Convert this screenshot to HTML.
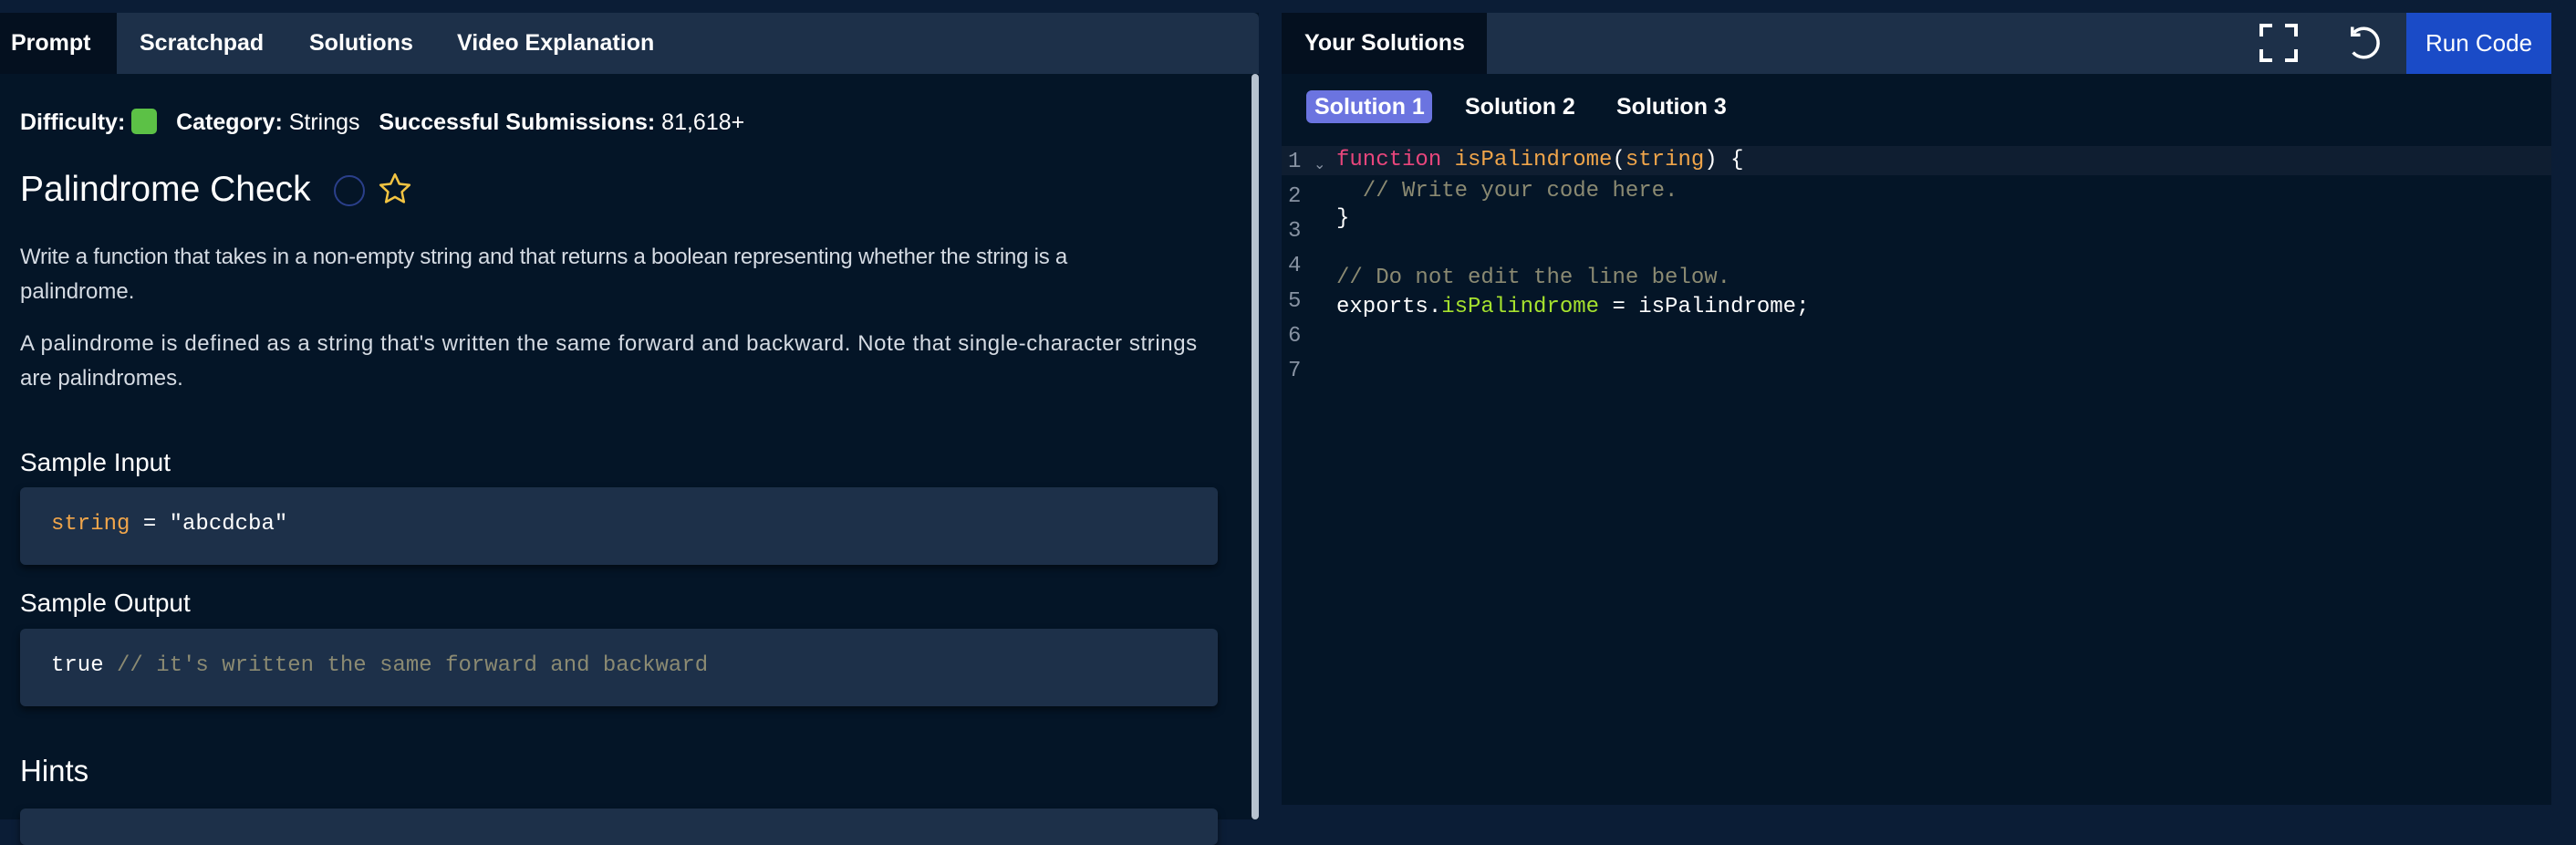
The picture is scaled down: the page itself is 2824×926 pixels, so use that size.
<!DOCTYPE html>
<html><head><style>
*{margin:0;padding:0;box-sizing:border-box}
body{width:2824px;height:898px;background:#0b1d36;font-family:"Liberation Sans",sans-serif;color:#fff;overflow:hidden;position:relative}
.abs{position:absolute}
.panel{background:#041527}
.tabbar{background:#1d3049}
.tab{position:absolute;top:14px;height:67px;line-height:67px;font-weight:bold;font-size:25px;white-space:nowrap}
.mono{font-family:"Liberation Mono","DejaVu Sans Mono",monospace}
p.t{position:absolute;left:22px;font-size:24px;color:#d5dbe3;white-space:nowrap}
.box{position:absolute;left:22px;width:1313px;background:#1d3049;border-radius:6px;box-shadow:0 4px 8px rgba(0,0,0,.5)}
.h{position:absolute;left:22px;font-size:28px;white-space:nowrap}
.ln{position:absolute;left:1412px;font-size:24px;color:#8792a2}
.cl{position:absolute;left:1465px;font-size:24px;white-space:pre}
</style></head><body>
<div class="abs panel" style="left:0;top:14px;width:1380px;height:884px"></div>
<div class="abs tabbar" style="left:0;top:14px;width:1380px;height:67px;border-radius:0 6px 0 0"></div>
<div class="abs" style="left:0;top:14px;width:128px;height:67px;background:#04101f"></div>
<div class="tab" style="left:12px">Prompt</div>
<div class="tab" style="left:153px">Scratchpad</div>
<div class="tab" style="left:339px">Solutions</div>
<div class="tab" style="left:501px">Video Explanation</div>
<div class="abs" style="left:1372px;top:81px;width:8px;height:817px;background:#b7c2cf;border-radius:4px"></div>

<div class="abs" style="left:22px;top:119px;font-size:25px;white-space:nowrap;line-height:28px">
<b>Difficulty:</b> <span style="display:inline-block;width:28px;height:28px;background:#5cc146;border-radius:5px;vertical-align:-5px"></span>&nbsp;&nbsp; <b>Category:</b> Strings&nbsp;&nbsp; <b>Successful Submissions:</b> 81,618+
</div>
<div class="abs" style="left:22px;top:186px;font-size:39px;white-space:nowrap">Palindrome Check</div>
<div class="abs" style="left:366px;top:192px;width:34px;height:34px;border:2px solid #2a3f8a;border-radius:50%"></div>
<svg class="abs" style="left:414px;top:188px" width="38" height="38" viewBox="0 0 24 24"><path d="M12 2l3 6.5 7 .8-5.2 4.8 1.4 7L12 17.6 5.8 21.1l1.4-7L2 9.3l7-.8z" fill="none" stroke="#f3c442" stroke-width="1.6" stroke-linejoin="round"/></svg>

<p class="t" style="top:268px;letter-spacing:-0.25px">Write a function that takes in a non-empty string and that returns a boolean representing whether the string is a</p>
<p class="t" style="top:306px">palindrome.</p>
<p class="t" style="top:363px;letter-spacing:0.6px">A palindrome is defined as a string that's written the same forward and backward. Note that single-character strings</p>
<p class="t" style="top:401px">are palindromes.</p>

<div class="h" style="top:491px">Sample Input</div>
<div class="box" style="top:534px;height:85px"></div>
<div class="abs mono" style="left:56px;top:561px;font-size:24px;white-space:pre"><span style="color:#f0a54a">string</span> = "abcdcba"</div>
<div class="h" style="top:645px">Sample Output</div>
<div class="box" style="top:689px;height:85px"></div>
<div class="abs mono" style="left:56px;top:716px;font-size:24px;white-space:pre">true <span style="color:#8b8a72">// it's written the same forward and backward</span></div>
<div class="h" style="top:826px;font-size:33px">Hints</div>
<div class="box" style="top:886px;height:40px"></div>

<div class="abs panel" style="left:1405px;top:14px;width:1392px;height:868px"></div>
<div class="abs tabbar" style="left:1405px;top:14px;width:1392px;height:67px"></div>
<div class="abs" style="left:1405px;top:14px;width:225px;height:67px;background:#04101f"></div>
<div class="tab" style="left:1430px">Your Solutions</div>
<div class="abs" style="left:2638px;top:14px;width:159px;height:67px;background:#1a4bc7;font-size:26px;line-height:67px;text-align:center">Run Code</div>
<svg class="abs" style="left:2477px;top:26px" width="42" height="42" viewBox="0 0 42 42" fill="none" stroke="#fff" stroke-width="4"><path d="M2 14V2h12M28 2h12v12M40 28v12H28M14 40H2V28"/></svg>
<svg class="abs" style="left:2570px;top:26px" width="42" height="42" viewBox="0 0 24 24" fill="none" stroke="#fff" stroke-width="2"><path d="M6 5.5A9 9 0 1 1 5.5 18"/><path d="M5 2v5h5"/></svg>

<div class="abs" style="left:1432px;top:99px;width:138px;height:36px;background:#6b74e0;border-radius:6px"></div>
<div class="abs" style="left:1441px;top:99px;line-height:36px;font-size:25px;font-weight:bold;white-space:nowrap">Solution 1</div>
<div class="abs" style="left:1606px;top:99px;line-height:36px;font-size:25px;font-weight:bold;white-space:nowrap">Solution 2</div>
<div class="abs" style="left:1772px;top:99px;line-height:36px;font-size:25px;font-weight:bold;white-space:nowrap">Solution 3</div>

<div class="abs" style="left:1405px;top:160px;width:1392px;height:32px;background:#0f1e31"></div>
<div class="ln mono" style="top:164px">1</div><div class="abs" style="left:1440px;top:170px;font-size:16px;color:#8792a2">⌄</div>
<div class="ln mono" style="top:202px">2</div>
<div class="ln mono" style="top:240px">3</div>
<div class="ln mono" style="top:278px">4</div>
<div class="ln mono" style="top:317px">5</div>
<div class="ln mono" style="top:355px">6</div>
<div class="ln mono" style="top:393px">7</div>
<div class="cl mono" style="top:162px"><span style="color:#e8467c">function</span> <span style="color:#f0a54a">isPalindrome</span>(<span style="color:#f0a54a">string</span>) {</div>
<div class="cl mono" style="top:196px;color:#8b8a72">  // Write your code here.</div>
<div class="cl mono" style="top:226px">}</div>
<div class="cl mono" style="top:291px;color:#8b8a72">// Do not edit the line below.</div>
<div class="cl mono" style="top:323px">exports.<span style="color:#a6e22e">isPalindrome</span> = isPalindrome;</div>
</body></html>
